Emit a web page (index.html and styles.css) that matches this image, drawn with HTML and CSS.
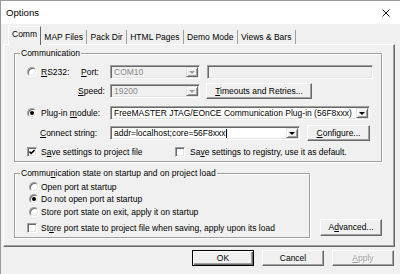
FILE: index.html
```html
<!DOCTYPE html>
<html>
<head>
    <title>Options</title>
    <link rel="stylesheet" href="styles.css">
</head>

<body>
  <div class="dlg">
    <div class="titlebar">
      <span class="title">Options</span>
      <svg class="close" width="8" height="8" viewBox="0 0 8 8">
        <path d="M0.5 0.5 L7.5 7.5 M7.5 0.5 L0.5 7.5" stroke="#1a1a1a" stroke-width="1" fill="none"/>
      </svg>
    </div>

    <div class="client">
      <div class="tabs">
        <div class="tab sel">Comm</div>
        <div class="tab">MAP Files</div>
        <div class="tab">Pack Dir</div>
        <div class="tab">HTML Pages</div>
        <div class="tab">Demo Mode</div>
        <div class="tab">Views &amp; Bars</div>
      </div>

      <div class="page">
        <fieldset class="grp grp-comm">
          <legend>Communication</legend>
          <div class="inner">
            <div class="row r1">
              <span class="radio"></span>
              <span class="lbl l-rs"><u>R</u>S232:</span>
              <span class="lbl l-port"><u>P</u>ort:</span>
              <div class="combo dis c-short"><span class="val">COM10</span><span class="drop"></span></div>
              <div class="field dis f-port"></div>
            </div>
            <div class="row r2">
              <span class="lbl l-speed"><u>S</u>peed:</span>
              <div class="combo dis c-short"><span class="val">19200</span><span class="drop"></span></div>
              <div class="btn b-timeouts"><u>T</u>imeouts and Retries...</div>
            </div>
            <div class="row r3">
              <span class="radio on"></span>
              <span class="lbl l-plugin">Plug-in <u>m</u>odule:</span>
              <div class="combo c-plugin"><span class="val">FreeMASTER JTAG/EOnCE Communication Plug-in (56F8xxx)</span><span class="drop"></span></div>
            </div>
            <div class="row r4">
              <span class="lbl l-connect"><u>C</u>onnect string:</span>
              <div class="combo c-connect"><span class="val">addr=localhost;core=56F8xxx<span class="caret"></span></span><span class="drop"></span></div>
              <div class="btn b-config"><u>C</u>onfigure...</div>
            </div>
            <div class="row r5">
              <span class="check"><svg width="6" height="6" viewBox="0 0 6 6"><path d="M0.4 2.6 L2.2 4.4 L5.6 1" stroke="#000" stroke-width="1.5" fill="none"/></svg></span>
              <span class="lbl l-save">S<u>a</u>ve settings to project file</span>
              <span class="check c-reg"></span>
              <span class="lbl">Sa<u>v</u>e settings to registry, use it as default.</span>
            </div>
          </div>
        </fieldset>

        <div class="lower">
          <fieldset class="grp grp-state">
            <legend>Commu<u>n</u>ication state on startup and on project load</legend>
            <div class="inner">
              <div class="row sm">
                <span class="radio"></span>
                <span class="lbl">Open port at startup</span>
              </div>
              <div class="row sm">
                <span class="radio on"></span>
                <span class="lbl">Do not open port at startup</span>
              </div>
              <div class="row sm s3">
                <span class="radio"></span>
                <span class="lbl">Store port state on exit, apply it on startup</span>
              </div>
              <div class="row sm s4">
                <span class="check"></span>
                <span class="lbl">St<u>o</u>re port state to project file when saving, apply upon its load</span>
              </div>
            </div>
          </fieldset>
          <div class="btn b-adv">A<u>d</u>vanced...</div>
        </div>
      </div>

      <div class="buttons">
        <div class="btn def">OK</div>
        <div class="btn">Cancel</div>
        <div class="btn off"><u>A</u>pply</div>
      </div>
    </div>
  </div>
</body>

</html>
```

FILE: styles.css
```css
body {
  margin: 0;
  overflow: hidden;
  font-family: 'Liberation Sans', Arial, sans-serif;
  font-size: 8.5px;
  color: #000;
}

.dlg {
  width: 400px;
  height: 274px;
  box-sizing: border-box;
  border-left: 1px solid #9a9a9a;
  background: #f0f0f0;
}

/* title bar */
.titlebar {
  height: 24px;
  box-sizing: border-box;
  border-top: 1px solid #9a9a9a;
  background: #fff;
  display: flex;
  align-items: center;
  justify-content: space-between;
  padding: 0 10px 0 5px;
}
.title {
  font-size: 9.6px;
}
.close {
  display: block;
}

/* tabs */
.tabs {
  display: flex;
  align-items: flex-end;
  height: 16px;
  margin-top: 4px;
  padding-left: 7px;
}
.tab {
  height: 14px;
  line-height: 14px;
  padding: 0 3.3px;
  border-right: 1px solid #a0a0a0;
  white-space: nowrap;
}
.tab.sel {
  position: relative;
  z-index: 1;
  height: 16px;
  line-height: 14px;
  padding: 0 3px 2px 3px;
  margin-bottom: -1px;
  box-sizing: content-box;
  background: #f0f0f0;
  border-top: 1px solid #fff;
  border-left: 1px solid #fff;
  border-right: 1px solid #696969;
}

.page {
  width: 392px;
  height: 203px;
  margin-left: 2px;
  box-sizing: border-box;
  border: 1px solid;
  border-color: #fff #696969 #696969 #fff;
  box-shadow: inset -1px -1px 0 #a0a0a0;
}

/* group boxes */
.grp {
  margin: 0;
  padding: 0;
  min-width: 0;
  box-sizing: border-box;
  border: 1px solid #a0a0a0;
  box-shadow: inset 1px 1px 0 #fff, 1px 1px 0 #fff;
}
.grp legend {
  padding: 0 1px;
  margin-left: 5px;
  line-height: 10px;
  background: #f0f0f0;
}
.grp-comm {
  width: 368px;
  margin: 3px 0 0 10px;
}
.grp-comm .inner {
  padding: 6px 0 1px 12px;
}

.lower {
  display: flex;
  align-items: flex-end;
  margin: 6px 0 0 10px;
}
.grp-state {
  width: 296px;
}
.grp-state .inner {
  padding: 3px 0 3px 12px;
}

.row {
  display: flex;
  align-items: center;
  height: 16px;
}
.row.sm {
  height: 12px;
}
.r2 { margin-top: 3px; }
.r3 { margin-top: 6px; }
.r4 { margin-top: 4px; }
.r5 { margin-top: 3px; }
.s3 { margin-top: 1px; }
.s4 { margin-top: 4px; }

.lbl {
  line-height: 10px;
  white-space: nowrap;
  flex: none;
}
.l-rs { width: 40px; }
.l-port { width: 29px; }
.l-speed { width: 32px; margin-left: 51px; }
.l-plugin { width: 69px; }
.l-connect { width: 70px; margin-left: 13px; }
.l-save { width: 134px; }

/* radio and check */
.radio,
.check {
  width: 10px;
  height: 10px;
  flex: none;
  box-sizing: border-box;
  border: 1px solid;
  border-color: #a0a0a0 #fff #fff #a0a0a0;
  box-shadow: inset 1px 1px 0 #696969, inset -1px -1px 0 #e3e3e3;
  background: #fff;
  margin-right: 4px;
  display: flex;
  align-items: center;
  justify-content: center;
}
.radio {
  border-radius: 50%;
}
.radio.on::after {
  content: "";
  width: 4px;
  height: 4px;
  border-radius: 50%;
  background: #000;
}
.check svg {
  display: block;
}
.c-reg {
  margin-right: 5px;
}
.grp-state .radio {
  margin: 0 2px 0 2px;
}

/* combos and edits */
.combo,
.field {
  height: 14px;
  flex: none;
  box-sizing: border-box;
  border: 1px solid;
  border-color: #a0a0a0 #fff #fff #a0a0a0;
  box-shadow: inset 1px 1px 0 #696969, inset -1px -1px 0 #e3e3e3;
  background: #fff;
  padding: 1px;
  display: flex;
}
.dis {
  background: #f0f0f0;
}
.val {
  flex: 1;
  padding-left: 2px;
  line-height: 10px;
  white-space: nowrap;
  overflow: hidden;
  display: flex;
  align-items: center;
}
.dis .val {
  color: #8a8a8a;
}
.caret {
  width: 1px;
  height: 9px;
  background: #000;
}
.drop {
  width: 12px;
  height: 10px;
  flex: none;
  box-sizing: border-box;
  border: 1px solid;
  border-color: #e3e3e3 #696969 #696969 #e3e3e3;
  box-shadow: inset 1px 1px 0 #fff, inset -1px -1px 0 #a0a0a0;
  background: #f0f0f0;
  display: flex;
  align-items: center;
  justify-content: center;
}
.drop::after {
  content: "";
  border-left: 3px solid transparent;
  border-right: 3px solid transparent;
  border-top: 3px solid #000;
}
.dis .drop::after {
  border-top-color: #a0a0a0;
}
.c-short { width: 90px; }
.c-plugin { width: 260px; }
.c-connect { width: 190px; }
.f-port {
  width: 166px;
  margin-left: 7px;
}

/* buttons */
.btn {
  height: 16px;
  box-sizing: border-box;
  border: 1px solid;
  border-color: #fff #696969 #696969 #fff;
  box-shadow: inset -1px -1px 0 #a0a0a0;
  background: #f0f0f0;
  line-height: 14px;
  text-align: center;
  white-space: nowrap;
  flex: none;
}
.b-timeouts {
  width: 106px;
  margin-left: 6px;
}
.b-config {
  width: 63px;
  margin-left: 7px;
}
.b-adv {
  width: 62px;
  height: 17px;
  line-height: 15px;
  margin: 0 0 2px 10px;
}

.buttons {
  display: flex;
  justify-content: flex-end;
  gap: 8px;
  margin-top: 3px;
  padding-right: 6px;
}
.buttons .btn {
  width: 62px;
}
.btn.def {
  border-color: #000;
  box-shadow: inset 1px 1px 0 #fff, inset -1px -1px 0 #696969, inset -2px -2px 0 #a0a0a0;
}
.btn.off {
  color: #a0a0a0;
  text-shadow: 1px 1px 0 #fff;
}
```
